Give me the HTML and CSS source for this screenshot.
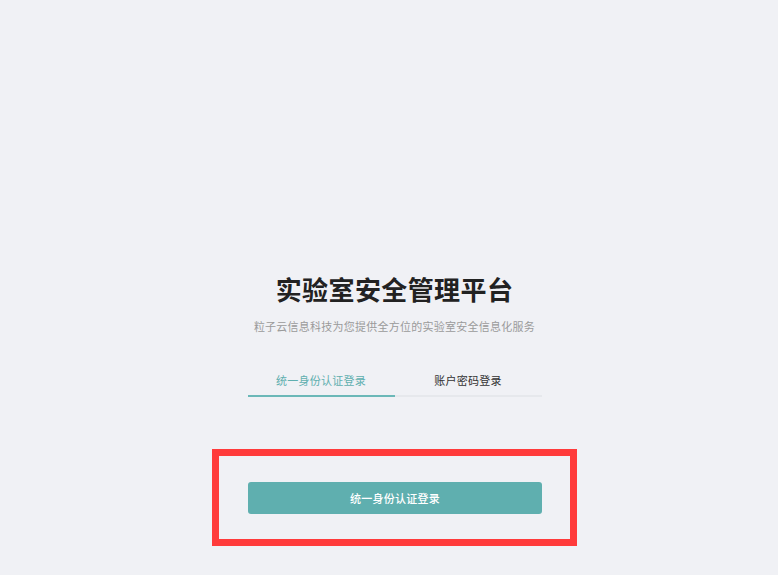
FILE: index.html
```html
<!DOCTYPE html>
<html lang="zh-CN">

<head>
    <meta charset="UTF-8">
    <meta name="viewport" content="width=device-width, initial-scale=1.0">
    <link rel="stylesheet" href="styles.css">
    <title>实验室安全管理平台</title>
</head>

<body>
    <main class="login">
        <h1 class="login_titulo">实验室安全管理平台</h1>
        <p class="login_sub">粒子云信息科技为您提供全方位的实验室安全信息化服务</p>
        <div class="login_tabs">
            <div class="login_tab ativo">统一身份认证登录</div>
            <div class="login_tab">账户密码登录</div>
        </div>
        <div class="login_caixa">
            <button class="login_botao">统一身份认证登录</button>
        </div>
    </main>
</body>

</html>
```

FILE: styles.css
```css
body,
h1,
p {
    margin: 0;
    padding: 0;
}

body {
    background-color: #f0f1f5;
    font-family: "Noto Sans CJK SC", "Noto Sans", sans-serif;
}

.login {
    display: flex;
    flex-direction: column;
    align-items: center;
    padding-top: 271px;
    padding-left: 11px;
}

.login_titulo {
    font-size: 26px;
    line-height: 36px;
    font-weight: bold;
    letter-spacing: 0.4px;
    color: #222;
}

.login_sub {
    margin-top: 11px;
    font-size: 11px;
    line-height: 16px;
    letter-spacing: 0.25px;
    color: #9a9a9a;
}

/* abas */
.login_tabs {
    display: flex;
    width: 294px;
    margin-top: 26px;
}

.login_tab {
    flex: 1;
    text-align: center;
    padding: 12px 0 7px;
    font-size: 11px;
    line-height: 16px;
    letter-spacing: 0.25px;
    color: #333;
    border-bottom: 2px solid #e6e8ec;
}

.login_tab.ativo {
    color: #5fafaf;
    border-bottom-color: #6bb8b8;
}

/* caixa marcada */
.login_caixa {
    margin-top: 52px;
    padding: 26px 28px 25px 29px;
    border: 7px solid #ff3b3b;
}

.login_botao {
    display: block;
    width: 294px;
    height: 32px;
    border: none;
    border-radius: 3px;
    background-color: #5fafaf;
    color: #fff;
    font-family: inherit;
    font-size: 11px;
    font-weight: 500;
    letter-spacing: 0.25px;
}
```
